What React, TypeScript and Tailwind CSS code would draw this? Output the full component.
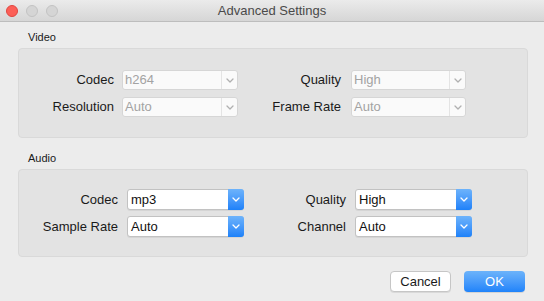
import { ReactNode } from "react";

function Chevron({ color }: { color: string }) {
  return (
    <svg width="8" height="5" viewBox="0 0 8 5" fill="none">
      <path d="M1 1l3 3 3-3" stroke={color} strokeWidth="1.3" strokeLinecap="round" strokeLinejoin="round" />
    </svg>
  );
}

function Select({ value, disabled, width }: { value: string; disabled?: boolean; width: string }) {
  if (disabled) {
    return (
      <div className={`${width} h-[20px] flex rounded-[3px] border border-[#d6d6d6] bg-[#fafafa]`}>
        <div className="flex-1 flex items-center pl-[2px] text-[13px] text-[#a3a3a3]">{value}</div>
        <div className="w-[16px] flex items-center justify-center border-l border-[#e4e4e4]">
          <Chevron color="#b0b0b0" />
        </div>
      </div>
    );
  }
  return (
    <div className={`${width} h-[21px] flex rounded-[3px] border border-[#c2c2c2] bg-white shadow-[0_1px_0_rgba(0,0,0,0.06)]`}>
      <div className="flex-1 flex items-center pl-[3px] text-[13px] text-[#111]">{value}</div>
      <div className="w-[16px] -my-px -mr-px flex items-center justify-center rounded-r-[3px] bg-gradient-to-b from-[#6db3fb] to-[#1c81f9]">
        <Chevron color="#ffffff" />
      </div>
    </div>
  );
}

function Field({
  label,
  labelW,
  gap,
  children,
}: {
  label: string;
  labelW: string;
  gap: string;
  children: ReactNode;
}) {
  return (
    <div className={`flex items-center ${gap}`}>
      <div className={`${labelW} text-right text-[13px] text-[#1a1a1a]`}>{label}</div>
      {children}
    </div>
  );
}

function Group({ title, children, className }: { title: string; children: ReactNode; className: string }) {
  return (
    <div className={className}>
      <div className="pl-[10px] text-[11px] leading-[13px] text-[#1a1a1a] mb-[4px]">{title}</div>
      {children}
    </div>
  );
}

export default function App() {
  return (
    <div
      className="w-[544px] h-[301px] bg-[#ececec] flex flex-col overflow-hidden"
      style={{ fontFamily: '"Liberation Sans", Arial, sans-serif' }}
    >
      {/* Title bar */}
      <div className="h-[22px] flex items-center relative bg-gradient-to-b from-[#ebebeb] to-[#d6d6d6] border-b border-[#bdbdbd]">
        <div className="flex gap-[8px] pl-[6px]">
          <span className="w-[12px] h-[12px] rounded-full bg-[#fc5f57] border border-[#e04640]" />
          <span className="w-[12px] h-[12px] rounded-full bg-[#d5d5d5] border border-[#c3c3c3]" />
          <span className="w-[12px] h-[12px] rounded-full bg-[#d5d5d5] border border-[#c3c3c3]" />
        </div>
        <div className="absolute inset-0 flex items-center justify-center text-[13px] text-[#4a4a4a]">
          Advanced Settings
        </div>
      </div>

      <div className="px-[18px]">
        {/* Video */}
        <Group title="Video" className="mt-[9px]">
          <div className="w-[510px] h-[90px] rounded-[4px] border border-[#d9d9d9] bg-[#e3e3e3] pt-[21px] flex flex-col gap-[7px]">
            <div className="flex">
              <Field label="Codec" labelW="w-[95px]" gap="gap-[8px]">
                <Select value="h264" disabled width="w-[116px]" />
              </Field>
              <Field label="Quality" labelW="w-[103px]" gap="gap-[10px]">
                <Select value="High" disabled width="w-[115px]" />
              </Field>
            </div>
            <div className="flex">
              <Field label="Resolution" labelW="w-[95px]" gap="gap-[8px]">
                <Select value="Auto" disabled width="w-[116px]" />
              </Field>
              <Field label="Frame Rate" labelW="w-[103px]" gap="gap-[10px]">
                <Select value="Auto" disabled width="w-[115px]" />
              </Field>
            </div>
          </div>
        </Group>

        {/* Audio */}
        <Group title="Audio" className="mt-[14px]">
          <div className="w-[510px] h-[88px] rounded-[4px] border border-[#d9d9d9] bg-[#e3e3e3] pt-[19px] flex flex-col gap-[6px]">
            <div className="flex">
              <Field label="Codec" labelW="w-[99px]" gap="gap-[9px]">
                <Select value="mp3" width="w-[117px]" />
              </Field>
              <Field label="Quality" labelW="w-[102px]" gap="gap-[9px]">
                <Select value="High" width="w-[117px]" />
              </Field>
            </div>
            <div className="flex">
              <Field label="Sample Rate" labelW="w-[99px]" gap="gap-[9px]">
                <Select value="Auto" width="w-[117px]" />
              </Field>
              <Field label="Channel" labelW="w-[102px]" gap="gap-[9px]">
                <Select value="Auto" width="w-[117px]" />
              </Field>
            </div>
          </div>
        </Group>

        {/* Buttons */}
        <div className="flex justify-end gap-[13px] mt-[14px] pr-[1px]">
          <button className="w-[61px] h-[21px] rounded-[4px] border border-[#c6c6c6] bg-white text-[13px] text-[#1a1a1a] shadow-[0_1px_0_rgba(0,0,0,0.08)]">
            Cancel
          </button>
          <button className="w-[61px] h-[21px] rounded-[4px] bg-gradient-to-b from-[#6cb3fa] to-[#1e83fa] text-[13px] text-white shadow-[0_1px_0_rgba(0,0,0,0.1)]">
            OK
          </button>
        </div>
      </div>
    </div>
  );
}
